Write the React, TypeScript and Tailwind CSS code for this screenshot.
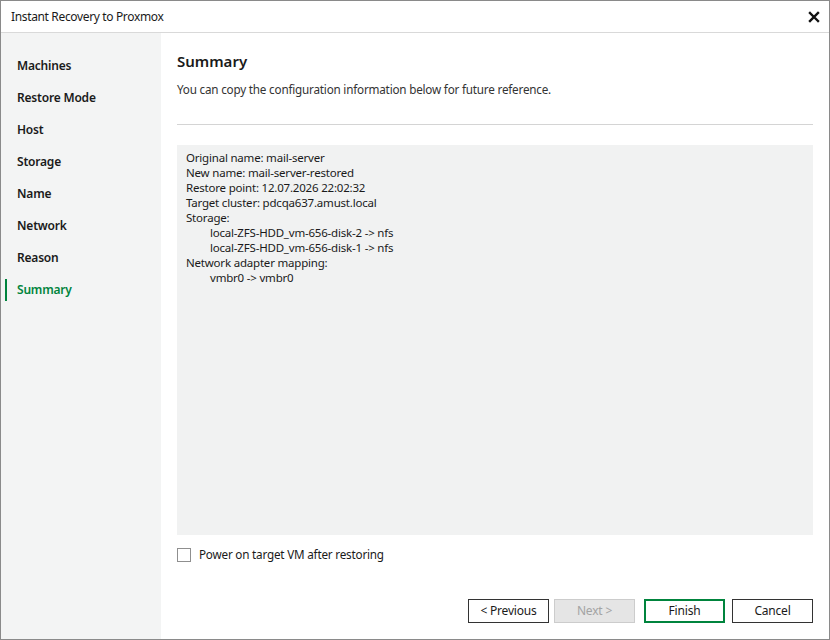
import React, { useState } from "react";

const steps = [
  "Machines",
  "Restore Mode",
  "Host",
  "Storage",
  "Name",
  "Network",
  "Reason",
  "Summary",
];

const summaryLines: { text: string; indent?: boolean }[] = [
  { text: "Original name: mail-server" },
  { text: "New name: mail-server-restored" },
  { text: "Restore point: 12.07.2026 22:02:32" },
  { text: "Target cluster: pdcqa637.amust.local" },
  { text: "Storage:" },
  { text: "local-ZFS-HDD_vm-656-disk-2 -> nfs", indent: true },
  { text: "local-ZFS-HDD_vm-656-disk-1 -> nfs", indent: true },
  { text: "Network adapter mapping:" },
  { text: "vmbr0 -> vmbr0", indent: true },
];

export default function App() {
  const [powerOn, setPowerOn] = useState(false);
  const active = "Summary";

  return (
    <div
      className="w-[830px] h-[640px] flex flex-col bg-white border border-[#8a8a8a] text-[#1a1a1a] overflow-hidden"
      style={{ fontFamily: '"Noto Sans", "Open Sans", sans-serif' }}
    >
      {/* title bar */}
      <div className="h-[32px] shrink-0 flex items-center justify-between pl-[10px] pr-[9px] border-b border-[#d9d9d9]">
        <span className="text-[12px] tracking-[-0.35px]">Instant Recovery to Proxmox</span>
        <svg width="12" height="12" viewBox="0 0 12 12">
          <path d="M2 2 L10 10 M10 2 L2 10" stroke="#111" strokeWidth="2.4" strokeLinecap="square" />
        </svg>
      </div>

      <div className="flex flex-1 min-h-0">
        {/* sidebar */}
        <div className="w-[160px] shrink-0 bg-[#f3f4f4] pt-[17px]">
          {steps.map((s) => (
            <div key={s} className="h-[32px] flex items-center relative">
              {s === active && (
                <div className="absolute left-[4px] top-[5px] w-[2px] h-[22px] bg-[#00843d]" />
              )}
              <span
                className={
                  "pl-[16px] text-[12px] font-semibold tracking-[-0.2px] " +
                  (s === active ? "text-[#00843d]" : "text-[#1a1a1a]")
                }
              >
                {s}
              </span>
            </div>
          ))}
        </div>

        {/* content */}
        <div className="flex-1 flex flex-col pl-[16px] pr-[16px] pt-[16px] pb-[16px]">
          <div className="text-[15px] font-semibold leading-[24px]">Summary</div>
          <div className="text-[11.7px] leading-[16px] text-[#333] mt-[8px] tracking-[-0.2px]">
            You can copy the configuration information below for future reference.
          </div>
          <div className="h-px bg-[#d4d4d4] mt-[27px]" />

          <div className="mt-[20px] h-[390px] bg-[#f1f2f2] px-[9px] py-[5px] text-[11.5px] leading-[15px] tracking-[-0.2px]">
            {summaryLines.map((l, i) => (
              <div key={i} className={l.indent ? "pl-[24px]" : ""}>
                {l.text}
              </div>
            ))}
          </div>

          <label className="mt-[11px] flex items-center gap-[8px] cursor-pointer">
            <span
              onClick={() => setPowerOn(!powerOn)}
              className="w-[14px] h-[14px] border border-[#8f8f8f] bg-white flex items-center justify-center"
            >
              {powerOn && (
                <svg width="10" height="10" viewBox="0 0 10 10">
                  <path d="M1.5 5 L4 7.5 L8.5 2" stroke="#333" strokeWidth="1.5" fill="none" />
                </svg>
              )}
            </span>
            <span className="text-[11.7px] tracking-[-0.2px]">Power on target VM after restoring</span>
          </label>

          <div className="mt-auto flex justify-end">
            <button className="w-[81px] h-[24px] mr-[5px] border border-[#333] bg-white text-[12px] tracking-[-0.2px]">
              &lt; Previous
            </button>
            <button
              disabled
              className="w-[81px] h-[24px] mr-[9px] border border-[#cccccc] bg-[#e5e5e5] text-[#a3a3a3] text-[12px] tracking-[-0.2px]"
            >
              Next &gt;
            </button>
            <button className="w-[81px] h-[24px] mr-[7px] border-2 border-[#00843d] bg-white text-[12px] tracking-[-0.2px]">
              Finish
            </button>
            <button className="w-[81px] h-[24px] border border-[#333] bg-white text-[12px] tracking-[-0.2px]">
              Cancel
            </button>
          </div>
        </div>
      </div>
    </div>
  );
}
